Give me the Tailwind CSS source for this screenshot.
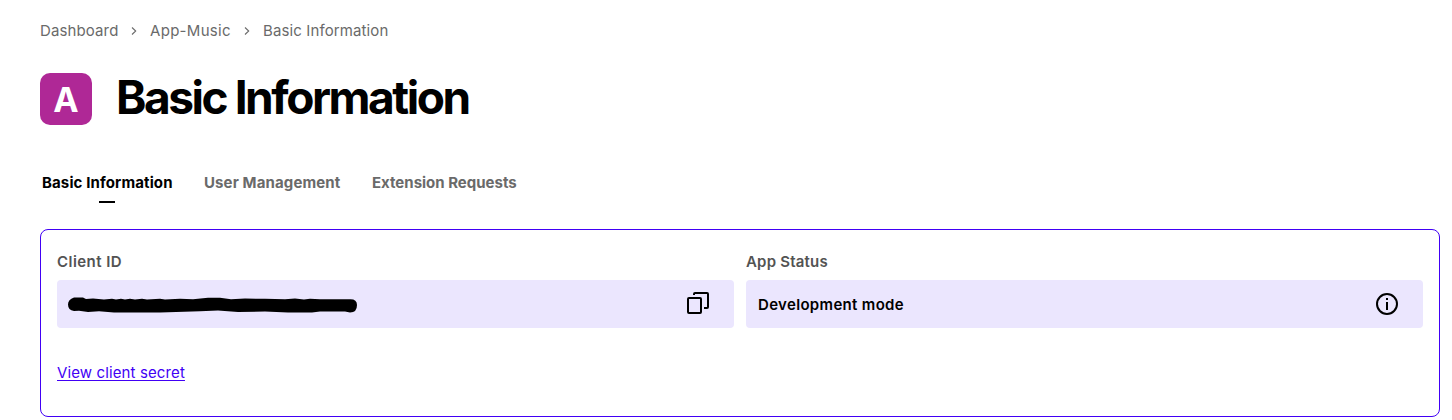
<!DOCTYPE html>
<html lang="en">
<head>
<meta charset="utf-8">
<title>Basic Information</title>
<script src="https://cdn.jsdelivr.net/npm/@tailwindcss/browser@4"></script>
</head>
<body class="bg-white font-['Inter',sans-serif] text-black h-[420px] overflow-hidden">
<main class="pl-10 pr-3 pt-[19px] whitespace-nowrap">
  <nav class="flex h-6 items-center text-[15px] leading-6 tracking-[0.12px] text-[#6a6a6a]">
    <span class="w-[78px]">Dashboard</span>
    <svg class="ml-[13px] mr-[13px] w-[6px] h-2 shrink-0" viewBox="0 0 6 8" fill="none" stroke="#6a6a6a" stroke-width="1.1"><path d="M1 .5 4.7 4 1 7.500"/></svg>
    <span class="w-[81px] tracking-[0.3px]">App-Music</span>
    <svg class="ml-[13px] mr-[13px] w-[6px] h-2 shrink-0" viewBox="0 0 6 8" fill="none" stroke="#6a6a6a" stroke-width="1.1"><path d="M1 .5 4.7 4 1 7.500"/></svg>
    <span>Basic Information</span>
  </nav>
  <header class="mt-[30px] flex h-[52px] items-center">
    <div class="flex size-[52px] items-center justify-center rounded-[10px] bg-[#af2896] text-[34px] font-bold text-white">A</div>
    <h1 class="ml-6 -mt-[5px] text-[46px] leading-[52px] font-bold tracking-[-2.45px]">Basic Information</h1>
  </header>
  <nav class="mt-[46px] flex h-8 pl-[2px] text-[15px] leading-6 font-bold text-[#6a6a6a]">
    <div class="flex w-[162px] flex-col tracking-[0.12px] text-black"><span>Basic Information</span><span class="ml-[57px] mt-[6px] h-[2px] w-4 bg-black"></span></div>
    <span class="w-[168px] tracking-[0.12px]">User Management</span>
    <span>Extension Requests</span>
  </nav>
  <section class="mt-[26px] h-[188px] rounded-lg border border-[#4100f5] px-4 pt-5">
    <div class="grid grid-cols-2 gap-3">
      <div>
        <h2 class="text-[15px] leading-6 font-semibold tracking-[0.45px] text-[#535353]">Client ID</h2>
        <div class="mt-[6px] flex h-12 items-center justify-between rounded bg-[#ebe6fe] pl-[11px] pr-6">
          <svg class="mt-[2px] h-4 w-[290px]" viewBox="68 297 290 16"><path d="M74 297.500H83L86 299 93 298.500 104 299.500 112 298.800 116 299.500 121 298.800 125 299.500 130 298.800 135 299.500 142 298.800 147 299.500 160 298.800 165 299.500 180 298.800 193 299.200 208 297.800H220L231 299.200 245 298.500 265 298.800 285 299.200 295 298.500 304 299.500 310 298.700 320 299.200H350Q357 299 357 305 357 312.500 350 312.500L345 311.500H320L312 312.500H288L265 311.500 238 312 218 310.500 200 311.200 160 312.500H114L99 311.300 88 312 79 310.700 74 311Q68 310 68 304.500 68 299.500 74 297.500Z"/></svg>
          <svg class="size-6" viewBox="0 0 24 24" fill="none" stroke="#000" stroke-width="2"><rect x="2" y="6" width="13" height="15" rx="1"/><path d="M8 3V2Q8 1 9 1H21Q22 1 22 2V15Q22 16 21 16H18"/></svg>
        </div>
      </div>
      <div>
        <h2 class="text-[15px] leading-6 font-semibold tracking-[0.2px] text-[#535353]">App Status</h2>
        <div class="mt-[6px] flex h-12 items-center justify-between rounded bg-[#ebe6fe] pl-3 pr-6 text-[15px] font-semibold tracking-[0.33px]">
          <span class="pt-[2px]">Development mode</span>
          <svg class="size-6" viewBox="0 0 24 24"><circle cx="12" cy="12" r="10" fill="none" stroke="#000" stroke-width="2"/><path d="M11 10h2v8h-2zM11 6h2v2h-2z"/></svg>
        </div>
      </div>
    </div>
    <a href="#" class="mt-[33px] inline-block text-[15px] leading-6 tracking-[0.12px] text-[#4100f5] underline underline-offset-2">View client secret</a>
  </section>
</main>
</body>
</html>
